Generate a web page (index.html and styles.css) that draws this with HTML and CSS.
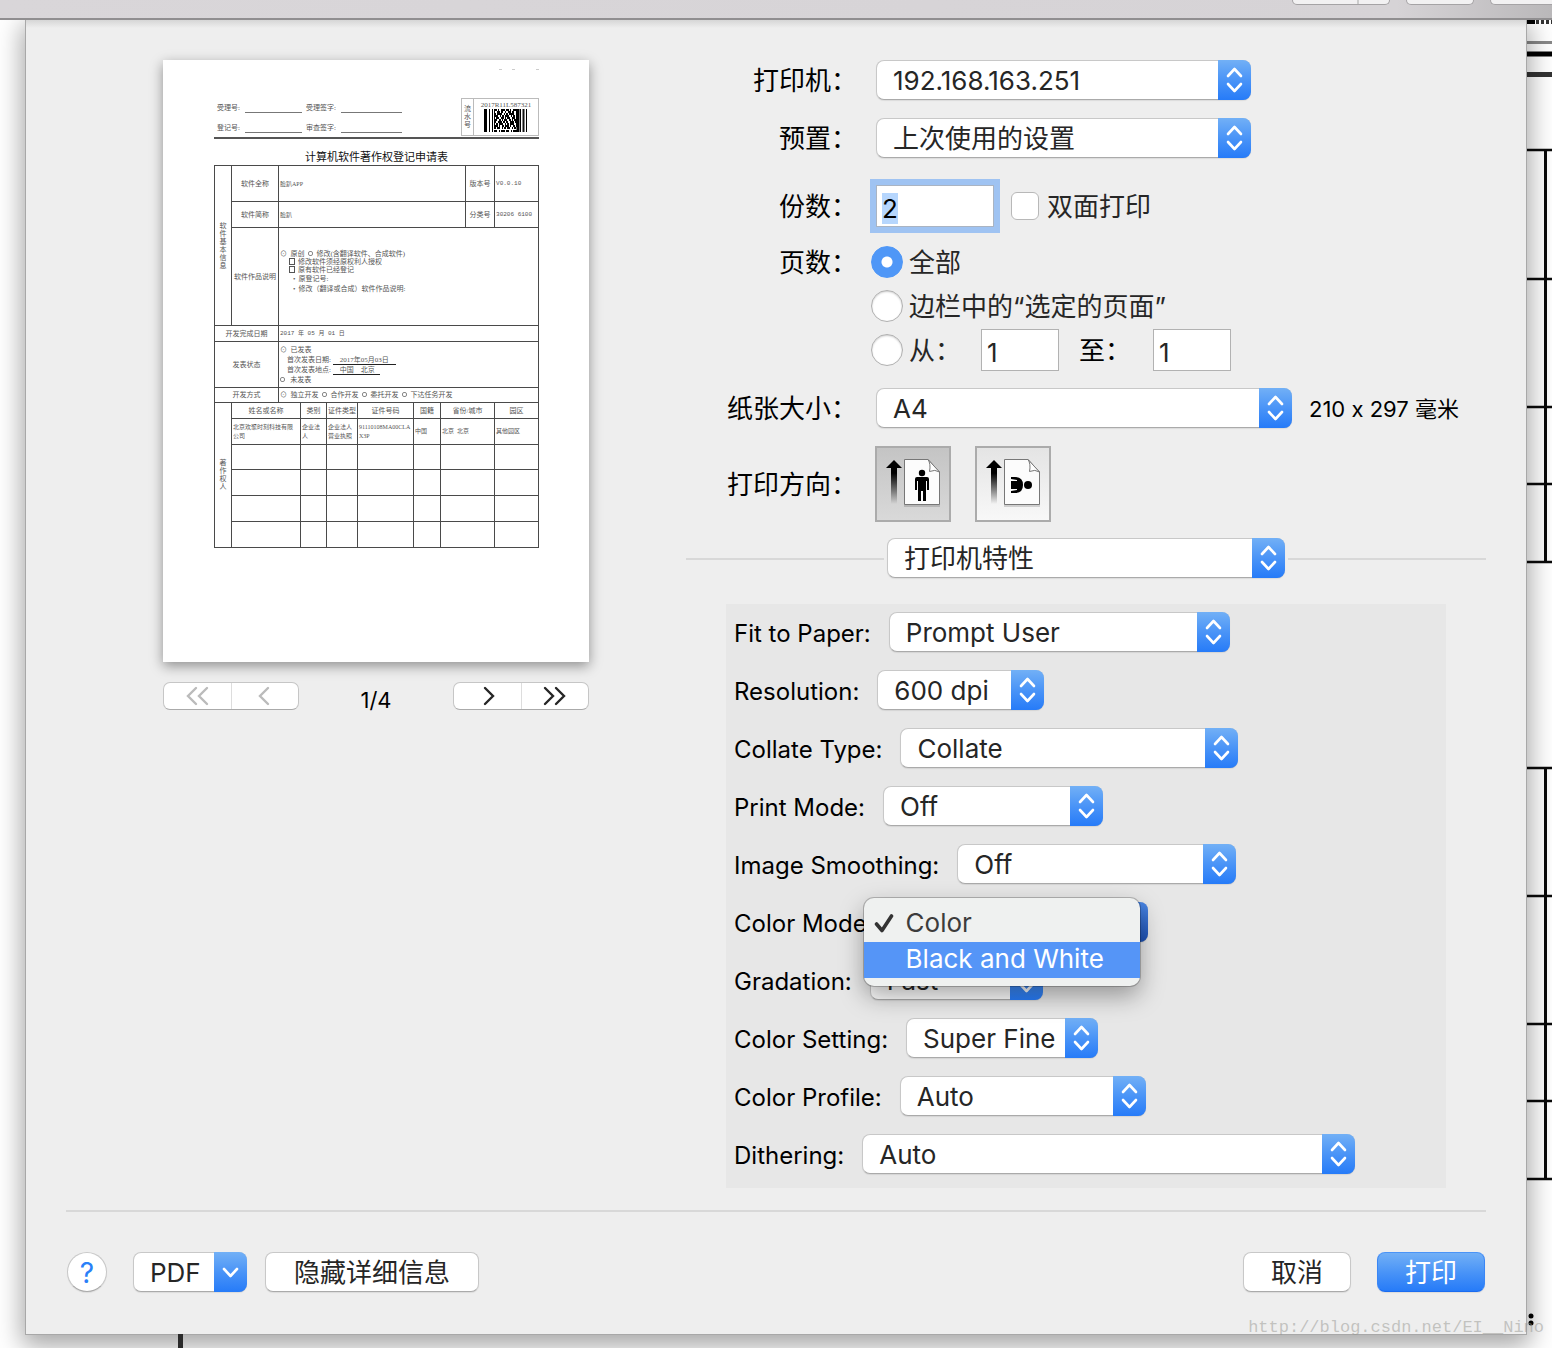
FILE: index.html
```html
<!DOCTYPE html>
<html lang="zh-CN">
<head>
<meta charset="utf-8">
<meta name="viewport" content="width=device-width, initial-scale=1">
<title>打印</title>
<link rel="stylesheet" href="styles.css">
</head>
<body>
<svg width="0" height="0" class="defs" aria-hidden="true">
  <defs>
    <linearGradient id="fade" x1="0" y1="0" x2="0" y2="1">
      <stop offset="0.3" stop-color="#000"/><stop offset="1" stop-color="#000" stop-opacity="0"/>
    </linearGradient>
    <symbol id="updown" viewBox="0 0 33 40">
      <path d="M10 16 L16.500 9 L23 16 M10 24 L16.500 31 L23 24" fill="none" stroke="#fff" stroke-width="2.600" stroke-linecap="round" stroke-linejoin="round"/>
    </symbol>
    <symbol id="page" viewBox="0 0 72 72">
      <path d="M17 12 L25 20 H20 V56 H14 V20 H9 Z" fill="url(#fade)"/>
      <path d="M27 13 H51 L63 26 V59 H27 Z" fill="#000" opacity="0.150"/>
      <path d="M27.500 11.500 H51 L62.500 24 V56.500 H27.500 Z" fill="#fcfcfc" stroke="#777"/>
      <path d="M51 11.500 Q54 16 52.500 23.500 Q58 21 62.500 24 Z" fill="#fff" stroke="#777"/>
    </symbol>
  </defs>
</svg>

<header class="toolbar">
  <span class="tool tool-pair"></span>
  <span class="tool tool-single"></span>
  <span class="tool tool-edge"></span>
</header>

<div class="stage">
  <form class="dialog">
    <div class="columns">
      <section class="preview" aria-label="预览">
        <div class="sheet">
          <svg class="marks" width="40" height="4" aria-hidden="true"><path d="M0 1.500h3 M13 1.500h3 M37 1.500h3" stroke="#ccc"/></svg>
          <div class="sheet-head">
            <div class="sign">
              <span>受理号:</span><i></i><span>受理签字:</span><i></i>
              <span>登记号:</span><i></i><span>审查签字:</span><i></i>
            </div>
            <div class="serial">
              <span class="serial-side">流<br>水<br>号</span>
              <div class="serial-code">
                <span>2017R11L587321</span>
                <svg width="44" height="23" viewBox="0 0 44 23" aria-hidden="true">
                  <path d="M2 0v23M5.500 0v23M8.500 0v23M36.500 0v23M42.500 0v23" stroke="#000" stroke-width="1"/>
                  <path d="M1.500 0v23M34 0v23" stroke="#000" stroke-width="3"/>
                  <path d="M39.500 0v23" stroke="#111" stroke-width="2"/>
                  <g stroke="#000" stroke-width="2">
                    <path d="M10 1h23" stroke-dasharray="3 1 1 2 4 1"/>
                    <path d="M10 3h23" stroke-dasharray="1 2 3 1 2 2"/>
                    <path d="M10 5h23" stroke-dasharray="2 1 5 2 1 1"/>
                    <path d="M10 7h23" stroke-dasharray="4 2 1 1 2 1"/>
                    <path d="M10 9h23" stroke-dasharray="1 1 3 2 3 1"/>
                    <path d="M10 11h23" stroke-dasharray="3 2 2 1 1 1"/>
                    <path d="M10 13h23" stroke-dasharray="2 2 4 1 2 1"/>
                    <path d="M10 15h23" stroke-dasharray="1 1 2 1 4 2"/>
                    <path d="M10 17h23" stroke-dasharray="4 1 1 2 2 1"/>
                    <path d="M10 19h23" stroke-dasharray="2 1 3 2 1 1"/>
                    <path d="M10 22h23" stroke-dasharray="3 2 1 1 4 1"/>
                  </g>
                </svg>
              </div>
            </div>
          </div>
          <h2 class="sheet-title">计算机软件著作权登记申请表</h2>
          <table class="record">
            <colgroup><col class="c17"><col class="c47"><col class="c22"><col class="c26"><col class="c31"><col class="c56"><col class="c27"><col class="c25"><col class="c29"><col class="c44"></colgroup>
            <tbody>
              <tr class="r36"><th rowspan="3" class="side">软件基本信息</th><th>软件全称</th><td colspan="6" class="small">脸趴APP</td><th>版本号</th><td class="small mono">V0.0.10</td></tr>
              <tr class="r26"><th>软件简称</th><td colspan="6" class="small">脸趴</td><th>分类号</th><td class="small mono">30206 6100</td></tr>
              <tr class="r98"><th>软件作品说明</th><td colspan="8" class="notes">
                <p>⊙&nbsp; 原创&nbsp; <s></s>&nbsp; 修改(含翻译软件、合成软件)</p>
                <p class="in"><b></b>修改软件须经原权利人授权</p>
                <p class="in"><b></b>原有软件已经登记</p>
                <p class="in wide"><span>•</span>原登记号:</p>
                <p class="in wide"><span>•</span>修改（翻译或合成）软件作品说明:</p>
              </td></tr>
              <tr class="r16"><th colspan="2">开发完成日期</th><td colspan="8" class="mono">2017 年 05 月 01 日</td></tr>
              <tr class="r46"><th colspan="2">发表状态</th><td colspan="8" class="status">
                <p>⊙&nbsp; 已发表</p>
                <p class="sub">首次发表日期: <u>&nbsp;&nbsp;&nbsp;&nbsp;2017年05月03日&nbsp;&nbsp;&nbsp;&nbsp;</u></p>
                <p class="sub">首次发表地点: <u>&nbsp;&nbsp;&nbsp;&nbsp;中国&nbsp;&nbsp;&nbsp;&nbsp;北京&nbsp;&nbsp;&nbsp;</u></p>
                <p><s></s>&nbsp;&nbsp; 未发表</p>
              </td></tr>
              <tr class="r15"><th colspan="2">开发方式</th><td colspan="8">⊙&nbsp; 独立开发&nbsp; <s></s>&nbsp; 合作开发&nbsp; <s></s>&nbsp; 委托开发&nbsp; <s></s>&nbsp; 下达任务开发</td></tr>
              <tr class="r16"><th rowspan="6" class="side">著作权人</th><th colspan="2">姓名或名称</th><th>类别</th><th>证件类型</th><th>证件号码</th><th>国籍</th><th colspan="2">省份/城市</th><th>园区</th></tr>
              <tr class="r26 owner"><td colspan="2" class="name">北京欢聚时刻科技有限公司</td><td>企业法人</td><td>企业法人营业执照</td><td>91110108MA00CLAX3P</td><td>中国</td><td colspan="2">北京&nbsp; 北京</td><td>其他园区</td></tr>
              <tr class="r25"><td colspan="2"></td><td></td><td></td><td></td><td></td><td colspan="2"></td><td></td></tr>
              <tr class="r26"><td colspan="2"></td><td></td><td></td><td></td><td></td><td colspan="2"></td><td></td></tr>
              <tr class="r26"><td colspan="2"></td><td></td><td></td><td></td><td></td><td colspan="2"></td><td></td></tr>
              <tr class="r26"><td colspan="2"></td><td></td><td></td><td></td><td></td><td colspan="2"></td><td></td></tr>
            </tbody>
          </table>
        </div>
        <nav class="pager" aria-label="页面">
          <div class="segments">
            <button type="button" disabled aria-label="第一页"><svg width="24" height="20"><path d="M11 2 L3 10 L11 18 M22 2 L14 10 L22 18"/></svg></button>
            <button type="button" disabled aria-label="上一页"><svg width="24" height="20"><path d="M15 2 L7 10 L15 18"/></svg></button>
          </div>
          <span class="page-count">1/4</span>
          <div class="segments">
            <button type="button" aria-label="下一页"><svg width="24" height="20"><path d="M10 2 L18 10 L10 18"/></svg></button>
            <button type="button" aria-label="最后一页"><svg width="24" height="20"><path d="M2 2 L10 10 L2 18 M13 2 L21 10 L13 18"/></svg></button>
          </div>
        </nav>
      </section>

      <section class="settings">
        <div class="row">
          <label for="printer">打印机：</label>
          <span class="popup w375"><select id="printer"><option>192.168.163.251</option></select><svg class="cap"><use href="#updown"/></svg></span>
        </div>
        <div class="row">
          <label for="preset">预置：</label>
          <span class="popup w375"><select id="preset"><option>上次使用的设置</option></select><svg class="cap"><use href="#updown"/></svg></span>
        </div>
        <div class="row copies">
          <label for="copies">份数：</label>
          <div class="controls">
            <input class="field focused" id="copies" type="text" value="2">
            <input class="tick" id="duplex" type="checkbox"><label class="after" for="duplex">双面打印</label>
          </div>
        </div>
        <div class="row pages">
          <span class="caption" id="pages-label">页数：</span>
          <div class="options" role="radiogroup" aria-labelledby="pages-label">
            <div class="option"><input type="radio" name="pages" id="all" checked><label for="all">全部</label></div>
            <div class="option"><input type="radio" name="pages" id="sel"><label for="sel">边栏中的“选定的页面”</label></div>
            <div class="option"><input type="radio" name="pages" id="range"><label for="range">从：</label>
              <input class="field range" type="text" value="1" aria-label="从"><label class="to" for="to">至：</label><input class="field range" id="to" type="text" value="1"></div>
          </div>
        </div>
        <div class="row paper">
          <label for="paper">纸张大小：</label>
          <div class="controls"><span class="popup w416"><select id="paper"><option>A4</option></select><svg class="cap"><use href="#updown"/></svg></span><span class="size">210 x 297 毫米</span></div>
        </div>
        <div class="row orient">
          <span class="caption">打印方向：</span>
          <div class="controls orient-set">
            <button type="button" class="orient-btn on" aria-label="纵向" aria-pressed="true"><svg width="72" height="72"><use href="#page"/><circle cx="45" cy="25" r="3.200"/><path d="M40 29 H50 Q52 29 52 31 V42 H50 V33 H49 V53 H46 V43 H44 V53 H41 V33 H40 V42 H38 V31 Q38 29 40 29 Z"/></svg></button>
            <button type="button" class="orient-btn" aria-label="横向" aria-pressed="false"><svg width="72" height="72"><use href="#page"/><circle cx="51" cy="37" r="4"/><path d="M34 29 H38 Q46 29 46 37 Q46 45 38 45 H34 V43 L40 42 V41 H34 V33 H40 V32 L34 31 Z"/></svg></button>
          </div>
        </div>
        <div class="divider">
          <span class="popup w398"><select aria-label="选项面板"><option>打印机特性</option></select><svg class="cap"><use href="#updown"/></svg></span>
        </div>

        <div class="features">
          <div class="feature"><label for="fit">Fit to Paper:</label><span class="popup w341"><select id="fit"><option>Prompt User</option></select><svg class="cap"><use href="#updown"/></svg></span></div>
          <div class="feature"><label for="res">Resolution:</label><span class="popup w167"><select id="res"><option>600 dpi</option></select><svg class="cap"><use href="#updown"/></svg></span></div>
          <div class="feature"><label for="collate">Collate Type:</label><span class="popup w338"><select id="collate"><option>Collate</option></select><svg class="cap"><use href="#updown"/></svg></span></div>
          <div class="feature"><label for="mode">Print Mode:</label><span class="popup w220"><select id="mode"><option>Off</option></select><svg class="cap"><use href="#updown"/></svg></span></div>
          <div class="feature"><label for="smooth">Image Smoothing:</label><span class="popup w279"><select id="smooth"><option>Off</option></select><svg class="cap"><use href="#updown"/></svg></span></div>
          <div class="feature"><label for="color">Color Mode:</label><span class="popup open w256"><select id="color"><option>Color</option><option>Black and White</option></select><svg class="cap"><use href="#updown"/></svg>
            <ul class="menu" role="listbox" aria-label="Color Mode">
              <li role="option" aria-selected="true"><svg width="20" height="22"><path d="M2.500 11 L8 17.500 L17.500 3" fill="none" stroke="#333" stroke-width="3.600" stroke-linecap="round" stroke-linejoin="round"/></svg>Color</li>
              <li role="option" class="active" aria-selected="false">Black and White</li>
            </ul></span></div>
          <div class="feature"><label for="grad">Gradation:</label><span class="popup w173"><select id="grad"><option>Fast</option></select><svg class="cap"><use href="#updown"/></svg></span></div>
          <div class="feature"><label for="setting">Color Setting:</label><span class="popup w192"><select id="setting"><option>Super Fine</option></select><svg class="cap"><use href="#updown"/></svg></span></div>
          <div class="feature"><label for="profile">Color Profile:</label><span class="popup w246"><select id="profile"><option>Auto</option></select><svg class="cap"><use href="#updown"/></svg></span></div>
          <div class="feature"><label for="dither">Dithering:</label><span class="popup w493"><select id="dither"><option>Auto</option></select><svg class="cap"><use href="#updown"/></svg></span></div>
        </div>
      </section>
    </div>

    <footer class="actions">
      <button type="button" class="help" aria-label="帮助">?</button>
      <button type="button" class="btn pdf">PDF<svg class="cap" viewBox="0 0 33 40"><path d="M10 17 L16.500 24 L23 17" fill="none" stroke="#fff" stroke-width="2.600" stroke-linecap="round" stroke-linejoin="round"/></svg></button>
      <button type="button" class="btn details">隐藏详细信息</button>
      <button type="button" class="btn cancel">取消</button>
      <button type="submit" class="btn primary">打印</button>
    </footer>
  </form>

  <svg class="gutter" width="26" height="1328" aria-hidden="true">
    <path d="M0 2h9" stroke="#000" stroke-width="4"/>
    <path d="M10 2h16" stroke="#333" stroke-width="4" stroke-dasharray="3 2"/>
    <path d="M0 22.500h26" stroke="#888" stroke-width="3"/>
    <path d="M0 34h26" stroke="#000" stroke-width="5"/>
    <path d="M0 54.500h26" stroke="#333" stroke-width="5"/>
    <path d="M0 130h26M0 259h26M0 387h26M0 464h26M0 542h26M0 748h26M0 876h26M0 1004h26M0 1081h26M0 1159h26" stroke="#0a0a0a" stroke-width="2.500"/>
    <path d="M19.500 130V542M19.500 748V1159" stroke="#0a0a0a" stroke-width="3"/>
    <circle cx="5" cy="1296" r="2.500"/><circle cx="5" cy="1303" r="2.500"/>
  </svg>
  <div class="below"><i></i></div>
  <span class="watermark">http://blog.csdn.net/EI__Nino</span>
</div>
<script src="app.js"></script>
</body>
</html>
```
FILE: styles.css
```css
* { box-sizing: border-box; }

:root {
  --blue: linear-gradient(#72b0f6, #4a94f7 50%, #267bf8);
  --ink: #262626;
}

body {
  margin: 0;
  background: #fff;
  color: #000;
  font-family: Inter, "Noto Sans CJK SC", sans-serif;
  font-feature-settings: "calt" 0;
  font-size: 26px;
  line-height: 40px;
}

button, select, input { font: inherit; color: var(--ink); margin: 0; }
.defs { position: absolute; }

/* Window toolbar */
.toolbar {
  display: flex;
  justify-content: flex-end;
  gap: 16px;
  height: 20px;
  background: linear-gradient(90deg, #d9d6d9, #d6d3d6 90%, #bab8ba);
  border-bottom: 2px solid #908e90;
}
.tool {
  height: 5px;
  background: #f2f1f2;
  border: 1px solid #a5a3a5;
  border-top: 0;
  border-radius: 0 0 8px 8px;
}
.tool-pair { width: 98px; background: linear-gradient(90deg, #f2f1f2 64px, #ccc 64px, #ccc 66px, #f2f1f2 66px); }
.tool-single { width: 68px; }
.tool-edge { width: 62px; border-right: 0; border-radius: 0 0 0 8px; }

/* Sheet over the document */
.stage {
  position: relative;
  display: grid;
  grid-template-columns: 26px minmax(0, 1fr) 26px;
  overflow: hidden;
}
.dialog {
  grid-column: 2;
  grid-row: 1;
  position: relative;
  z-index: 1;
  padding: 40px 40px 41px;
  background: linear-gradient(#d6d6d6, #eee 8px);
  box-shadow: 0 0 0 1px #a8a8a8, 0 8px 24px 4px rgba(0, 0, 0, 0.35);
}
.gutter { grid-column: 3; grid-row: 1 / 3; }
.below { grid-column: 2; grid-row: 2; height: 14px; padding-left: 152px; }
.below i { display: block; width: 5px; height: 14px; background: #2a2a2a; position: relative; z-index: 2; }
.watermark {
  position: absolute;
  right: 8px;
  bottom: 8px;
  z-index: 3;
  font-family: "Liberation Mono", monospace;
  font-size: 17px;
  line-height: 24px;
  color: rgba(150, 150, 145, 0.5);
}

.columns { display: grid; grid-template-columns: minmax(426px, 1fr) minmax(0, 800px); }

/* Preview */
.preview { display: flex; flex-direction: column; align-items: center; gap: 20px; }
.sheet {
  width: 426px;
  height: 602px;
  padding: 8px 50px 0 51px;
  background: #fff;
  box-shadow: 0 4px 12px rgba(0, 0, 0, 0.4);
  color: #555;
  font-family: "Liberation Serif", "Noto Sans CJK SC", serif;
  font-size: 7px;
  line-height: 8px;
}
.mono { font-family: "Liberation Mono", "Noto Sans CJK SC", monospace; font-size: 6px; }
.marks { display: block; margin: 0 0 26px auto; }
.sheet-head {
  display: flex;
  justify-content: space-between;
  height: 41px;
  padding-bottom: 1px;
  border-bottom: 2px solid #555;
}
.sign {
  display: grid;
  grid-template-columns: 24px 57px 31px 61px;
  grid-template-rows: 20px 20px;
  column-gap: 4px;
  padding-left: 3px;
  align-items: center;
}
.sign span { white-space: nowrap; }
.sign i { height: 10px; border-bottom: 1px solid #777; }
.serial { display: flex; width: 78px; height: 38px; border: 1px solid #bbb; }
.serial-side { width: 12px; padding-top: 6px; border-right: 1px solid #bbb; text-align: center; }
.serial-code { flex: 1; display: flex; flex-direction: column; align-items: center; padding-top: 2px; }
.serial-code svg { display: block; }
.sheet-title {
  margin: 0;
  padding-top: 10px;
  color: #111;
  font-size: 11px;
  font-weight: 400;
  line-height: 16px;
  text-align: center;
}

.record {
  width: 325px;
  table-layout: fixed;
  border-collapse: collapse;
}
.record th, .record td {
  padding: 0 1px;
  border: 1px solid #4a4a4a;
  font-weight: 400;
  text-align: left;
  overflow: hidden;
}
.record th { padding: 0; text-align: center; white-space: nowrap; }
.record th.side { padding: 0 4px; white-space: normal; }
.record p { margin: 0; white-space: nowrap; }
.record s { display: inline-block; width: 5px; height: 5px; border: 1px solid #888; border-radius: 2px; }
.record .small, .record .owner td { font-size: 6px; }
.record .owner td { line-height: 9px; word-break: break-all; }
.record .owner .name { padding-right: 5px; }
.record .notes { padding-bottom: 10px; }
.notes .in { display: flex; align-items: center; gap: 3px; padding-left: 9px; }
.notes .wide { padding-left: 13px; line-height: 10px; }
.notes b { width: 6px; height: 7px; border: 1px solid #555; }
.status p { line-height: 10px; }
.status .sub { padding-left: 7px; }
.status u { text-decoration: none; border-bottom: 1px solid #222; }
.c17 { width: 17px; } .c47 { width: 47px; } .c22 { width: 22px; } .c26 { width: 26px; } .c31 { width: 31px; }
.c56 { width: 56px; } .c27 { width: 27px; } .c25 { width: 25px; } .c29 { width: 29px; } .c44 { width: 44px; }
.r15 { height: 15px; } .r16 { height: 16px; } .r25 { height: 25px; } .r26 { height: 26px; }
.r36 { height: 36px; } .r46 { height: 46px; } .r98 { height: 98px; }

.pager { display: flex; justify-content: space-between; width: 426px; height: 28px; }
.page-count { font-size: 22px; line-height: 36px; }
.segments {
  display: flex;
  width: 136px;
  background: #fff;
  border: 1px solid #c6c6c6;
  border-bottom-color: #aaa;
  border-radius: 7px;
}
.segments button {
  flex: 1;
  display: grid;
  place-items: center;
  padding: 0;
  border: 0;
  background: none;
}
.segments button + button { border-left: 1px solid #ddd; }
.segments svg { fill: none; stroke: #262626; stroke-width: 2.4px; stroke-linecap: round; }
.segments button:disabled svg { stroke: #bbb; }

/* Form rows */
.row {
  display: grid;
  grid-template-columns: 171px minmax(0, 1fr);
  column-gap: 19px;
  align-items: center;
  margin-bottom: 18px;
}
.row label, .caption { padding-top: 2px; white-space: nowrap; line-height: 38px; }
.row > label, .caption { text-align: right; }
.controls { display: flex; align-items: center; }
.copies { height: 44px; margin: 26px 0 12px; }
.pages { align-items: start; margin-bottom: 16px; }
.pages .caption { line-height: 42px; }
.option { display: flex; align-items: center; height: 44px; margin-left: -5px; gap: 6px; }
.option label { color: var(--ink); }
.after { margin-left: 8px; color: var(--ink); }
.orient { margin-bottom: 16px; }
.size { margin-left: 17px; padding-top: 2px; font-size: 22px; line-height: 38px; }

.popup { position: relative; display: block; height: 40px; }
.popup select {
  appearance: none;
  display: block;
  width: 100%;
  height: 40px;
  padding: 2px 33px 0 16px;
  background: #fff;
  border: 1px solid #c8c8c8;
  border-bottom-color: #aaa;
  border-radius: 8px;
  box-shadow: 0 1px 1px rgba(0, 0, 0, 0.08);
  line-height: 36px;
}
.cap {
  position: absolute;
  top: 0;
  right: 0;
  width: 33px;
  height: 40px;
  background: var(--blue);
  border-radius: 0 8px 8px 0;
  pointer-events: none;
}
.w167 { width: 167px; } .w173 { width: 173px; } .w192 { width: 192px; } .w220 { width: 220px; }
.w246 { width: 246px; } .w256 { width: 256px; } .w279 { width: 279px; } .w338 { width: 338px; }
.w341 { width: 341px; } .w375 { width: 375px; } .w398 { width: 398px; } .w416 { width: 416px; }
.w493 { width: 493px; }

.field {
  width: 118px;
  height: 42px;
  padding: 4px 5px 0;
  border: 1px solid #b2b2b2;
  border-radius: 0;
  background: #fff;
  outline: 0;
}
.focused { box-shadow: 0 0 0 6px #9fc3f2; border-color: #aab4c2; }
.field::selection { background: #b6d6fd; color: #000; }
.range { width: 78px; margin-left: 14px; }
.to { margin: 0 2px 0 14px; }
.option .to { color: #000; }

.tick {
  appearance: none;
  width: 28px;
  height: 28px;
  margin-left: 17px;
  background: #fff;
  border: 1px solid #b8b8b8;
  border-radius: 6px;
}
.option input[type="radio"] {
  appearance: none;
  width: 32px;
  height: 32px;
  background: #fff;
  border: 1px solid #b0b0b0;
  border-radius: 50%;
  box-shadow: inset 0 1px 2px rgba(0, 0, 0, 0.2);
}
.option input[type="radio"]:checked {
  background: radial-gradient(circle, #fff 5px, #4f97f7 6px);
  border-color: #4f97f7;
  box-shadow: none;
}

.orient-set { gap: 24px; margin-left: -1px; }
.orient-btn {
  width: 76px;
  height: 76px;
  padding: 0;
  border: 2px solid #ababab;
  background: linear-gradient(#e4e4e4, #f8f8f8);
}
.orient-btn.on { background: linear-gradient(#c4c4c4, #d9d9d9); }
.orient-btn svg { display: block; }

.divider { display: flex; align-items: center; gap: 3px; }
.divider::before, .divider::after { content: ""; flex: 1; height: 2px; margin-top: 2px; background: #d8d8d8; }

/* Printer features */
.features {
  display: flex;
  flex-direction: column;
  gap: 18px;
  margin: 26px 40px 0;
  padding: 8px 8px 14px;
  background: #e7e7e7;
}
.feature { display: flex; align-items: center; gap: 18px; height: 40px; }
.feature > label { padding-top: 4px; font-size: 24px; line-height: 36px; white-space: nowrap; }
.open .cap { background: linear-gradient(#4a86e4, #1c50b4); }
.menu {
  position: absolute;
  z-index: 2;
  top: -4px;
  left: -28px;
  width: 276px;
  margin: 0;
  padding: 8px 0;
  list-style: none;
  line-height: 34px;
  background: #eff1f0;
  border-radius: 10px;
  box-shadow: 0 0 0 1px rgba(0, 0, 0, 0.22), 0 10px 24px rgba(0, 0, 0, 0.35);
}
.menu li { position: relative; height: 36px; padding-left: 42px; color: #3c3c3c; }
.menu li svg { position: absolute; left: 10px; top: 7px; }
.menu .active { background: #5595f7; color: #fff; }

/* Bottom buttons */
.actions {
  display: flex;
  align-items: center;
  margin-top: 22px;
  padding: 40px 1px 0;
  border-top: 2px solid #d8d8d8;
}
.btn, .help {
  height: 40px;
  padding: 2px 0 0;
  background: #fff;
  border: 1px solid #c8c8c8;
  border-bottom-color: #aaa;
  border-radius: 8px;
  box-shadow: 0 1px 1px rgba(0, 0, 0, 0.08);
  line-height: 36px;
}
.help { width: 40px; border-radius: 50%; color: #2a80f8; font-size: 28px; }
.pdf { position: relative; width: 114px; margin: 0 18px 0 26px; padding-left: 16px; text-align: left; }
.pdf .cap { top: -1px; right: -1px; }
.details { width: 214px; }
.cancel { width: 108px; margin-left: auto; }
.primary { width: 108px; margin-left: 26px; background: var(--blue); border-color: #4a94f7 #3a86f5 #1b6cf0; color: #fff; }
```
FILE: app.js
```js
const copies = document.getElementById('copies');
copies.focus();
copies.select();
```
